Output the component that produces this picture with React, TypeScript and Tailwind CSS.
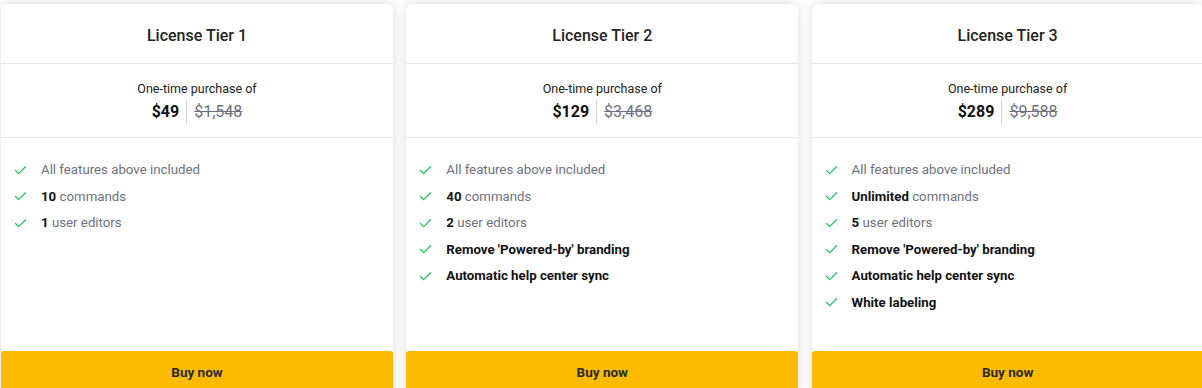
import { Check } from "lucide-react";

type Feature = { bold?: string; text?: string };

const tiers: { name: string; price: string; was: string; features: Feature[] }[] = [
  {
    name: "License Tier 1",
    price: "$49",
    was: "$1,548",
    features: [
      { text: "All features above included" },
      { bold: "10", text: "commands" },
      { bold: "1", text: "user editors" },
    ],
  },
  {
    name: "License Tier 2",
    price: "$129",
    was: "$3,468",
    features: [
      { text: "All features above included" },
      { bold: "40", text: "commands" },
      { bold: "2", text: "user editors" },
      { bold: "Remove 'Powered-by' branding" },
      { bold: "Automatic help center sync" },
    ],
  },
  {
    name: "License Tier 3",
    price: "$289",
    was: "$9,588",
    features: [
      { text: "All features above included" },
      { bold: "Unlimited", text: "commands" },
      { bold: "5", text: "user editors" },
      { bold: "Remove 'Powered-by' branding" },
      { bold: "Automatic help center sync" },
      { bold: "White labeling" },
    ],
  },
];

export default function App() {
  return (
    <div className="h-[388px] overflow-hidden bg-white font-['Roboto',sans-serif]">
      <div className="flex gap-[13.3px] pl-px pt-1">
        {tiers.map((t) => (
          <div key={t.name} className="flex h-[394px] w-[392px] shrink-0 flex-col rounded-t-md bg-white shadow-[0_0_12px_rgba(0,0,0,0.14)]">
            <div className="flex h-[60px] items-center justify-center border-b border-[#e3e5ea] pt-1">
              <h3 className="text-[16px] font-medium text-[#222]">{t.name}</h3>
            </div>
            <div className="flex h-[74px] flex-col items-center border-b border-[#e3e5ea] pt-[17px]">
              <p className="text-[12.5px] leading-4 text-[#222]">One-time purchase of</p>
              <div className="mt-[3px] flex items-center">
                <span className="pr-[7px] text-[16px] font-bold leading-6 text-[#111]">{t.price}</span>
                <span className="border-l border-[#d5d7dc] pl-[7px] text-[16px] leading-6 text-[#6b7280] line-through">{t.was}</span>
              </div>
            </div>
            <ul className="flex-1 space-y-[8.6px] px-[12px] pt-[23px]">
              {t.features.map((f, i) => (
                <li key={i} className="flex items-center text-[13.25px] leading-[18px]">
                  <Check className="mr-[13px] h-[15px] w-[15px] text-[#22c55e]" strokeWidth={2} />
                  <span>
                    {f.bold && <b className="font-bold text-[#111]">{f.bold}</b>}
                    {f.bold && f.text && " "}
                    {f.text && <span className="text-[#6b7280]">{f.text}</span>}
                  </span>
                </li>
              ))}
            </ul>
            <button className="mb-[5px] h-[42px] rounded-t-[3px] bg-[#fdbb00] text-[13.5px] font-bold text-[#2a2a2a]">
              Buy now
            </button>
          </div>
        ))}
      </div>
    </div>
  );
}
